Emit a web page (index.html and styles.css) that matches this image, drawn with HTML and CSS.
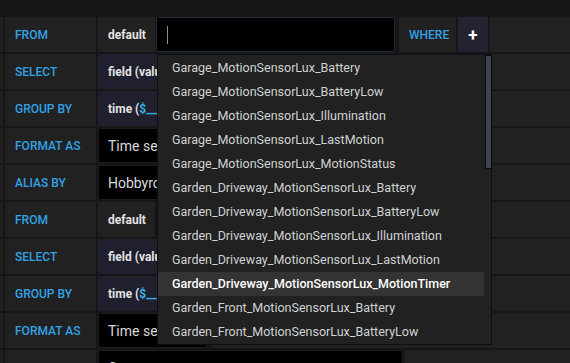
FILE: index.html
```html
<!DOCTYPE html>
<html>
<head>
  <title>Query Editor</title>
  <link rel="stylesheet" href="styles.css">
</head>
<body>
  <div class="editor">
    <!-- first query -->
    <div class="row">
      <div class="edge"></div>
      <div class="label">FROM</div>
      <div class="cell value default-cell">default</div>
      <div class="measure-input"><span class="caret"></span></div>
      <div class="cell keyword">WHERE</div>
      <div class="cell plus">+</div>
      <div class="cell filler"></div>
    </div>
    <div class="row">
      <div class="edge"></div>
      <div class="label">SELECT</div>
      <div class="cell value part">field (value) mean ()</div>
      <div class="cell filler"></div>
    </div>
    <div class="row">
      <div class="edge"></div>
      <div class="label">GROUP BY</div>
      <div class="cell value part">time (<span class="var">$__interval</span>) fill (null)</div>
      <div class="cell filler"></div>
    </div>
    <div class="row">
      <div class="edge"></div>
      <div class="label">FORMAT AS</div>
      <div class="box select-box">Time series</div>
      <div class="cell filler"></div>
    </div>
    <div class="row">
      <div class="edge"></div>
      <div class="label">ALIAS BY</div>
      <div class="box alias-box">Hobbyroom</div>
      <div class="cell filler"></div>
    </div>

    <!-- second query -->
    <div class="row">
      <div class="edge"></div>
      <div class="label">FROM</div>
      <div class="cell value default-cell">default</div>
      <div class="cell filler"></div>
    </div>
    <div class="row">
      <div class="edge"></div>
      <div class="label">SELECT</div>
      <div class="cell value part">field (value) mean ()</div>
      <div class="cell filler"></div>
    </div>
    <div class="row">
      <div class="edge"></div>
      <div class="label">GROUP BY</div>
      <div class="cell value part">time (<span class="var">$__interval</span>) fill (null)</div>
      <div class="cell filler"></div>
    </div>
    <div class="row">
      <div class="edge"></div>
      <div class="label">FORMAT AS</div>
      <div class="box select-box">Time series</div>
      <div class="cell filler"></div>
    </div>
    <div class="row">
      <div class="edge"></div>
      <div class="label">ALIAS BY</div>
      <div class="box alias-box">Garage</div>
      <div class="cell filler"></div>
    </div>
  </div>

  <ul class="typeahead">
    <li>Garage_MotionSensorLux_Battery</li>
    <li>Garage_MotionSensorLux_BatteryLow</li>
    <li>Garage_MotionSensorLux_Illumination</li>
    <li>Garage_MotionSensorLux_LastMotion</li>
    <li>Garage_MotionSensorLux_MotionStatus</li>
    <li>Garden_Driveway_MotionSensorLux_Battery</li>
    <li>Garden_Driveway_MotionSensorLux_BatteryLow</li>
    <li>Garden_Driveway_MotionSensorLux_Illumination</li>
    <li>Garden_Driveway_MotionSensorLux_LastMotion</li>
    <li class="active">Garden_Driveway_MotionSensorLux_MotionTimer</li>
    <li>Garden_Front_MotionSensorLux_Battery</li>
    <li>Garden_Front_MotionSensorLux_BatteryLow</li>
  </ul>
  <div class="scrollbar"></div>
</body>
</html>
```

FILE: styles.css
```css
body {
  margin: 0;
  background-color: #161616;
  font-family: Roboto, "Liberation Sans", sans-serif;
  overflow: hidden;
}

.editor {
  padding-top: 17px;
  display: flex;
  flex-direction: column;
  gap: 2px;
}

.row {
  display: flex;
  gap: 2px;
  height: 35px;
}

.edge {
  width: 3px;
  background-color: #202020;
}

.label {
  width: 81px;
  padding-left: 10px;
  display: flex;
  align-items: center;
  background-color: #212121;
  color: #33a2e5;
  font-size: 12px;
  font-weight: 500;
}

.cell {
  display: flex;
  align-items: center;
  background-color: #212121;
}

.value {
  padding: 0 10px;
  color: #e3e3e3;
  font-size: 12px;
  font-weight: bold;
  white-space: nowrap;
  overflow: hidden;
}

.default-cell {
  width: 37px;
}

.part {
  width: 200px;
  background-color: #1f1f2d;
}

.var {
  color: #33b5e5;
}

.measure-input {
  margin-left: -1px;
  width: 239px;
  background-color: #000;
  border: 1px solid #1d2b3a;
  border-radius: 2px;
  display: flex;
  align-items: center;
  padding-left: 10px;
  box-sizing: border-box;
}

.caret {
  width: 1px;
  height: 18px;
  background-color: #8e8e8e;
}

.keyword {
  margin-left: 2px;
  width: 47px;
  padding-left: 10px;
  color: #33a2e5;
  font-size: 12px;
  font-weight: 500;
}

.plus {
  width: 30px;
  justify-content: center;
  background-color: #232333;
  color: #fff;
  font-size: 17px;
  font-weight: bold;
}

.filler {
  flex: 1;
}

.box {
  background-color: #000;
  border: 1px solid #1c1c1c;
  border-radius: 2px;
  box-sizing: border-box;
  padding-left: 9px;
  display: flex;
  align-items: center;
  color: #d8d9da;
  font-size: 14px;
  white-space: nowrap;
  overflow: hidden;
}

.select-box {
  width: 109px;
  margin-right: 4px;
}

.alias-box {
  width: 305px;
}

.typeahead {
  position: absolute;
  left: 157px;
  top: 54px;
  width: 333px;
  height: 287px;
  margin: 0;
  padding: 1px 0;
  list-style: none;
  background-color: #212121;
  border: 1px solid #0e0e16;
  box-sizing: content-box;
}

.typeahead li {
  height: 24px;
  line-height: 24px;
  padding-left: 14px;
  margin-right: 7px;
  color: #d0d1d2;
  font-size: 12.5px;
  white-space: nowrap;
}

.typeahead li.active {
  background-color: #333333;
  color: #fff;
  font-weight: 500;
}

.scrollbar {
  position: absolute;
  left: 485px;
  top: 55px;
  width: 5px;
  height: 112px;
  background-color: #3d4352;
  border: 1px solid #0c0c14;
}
```
